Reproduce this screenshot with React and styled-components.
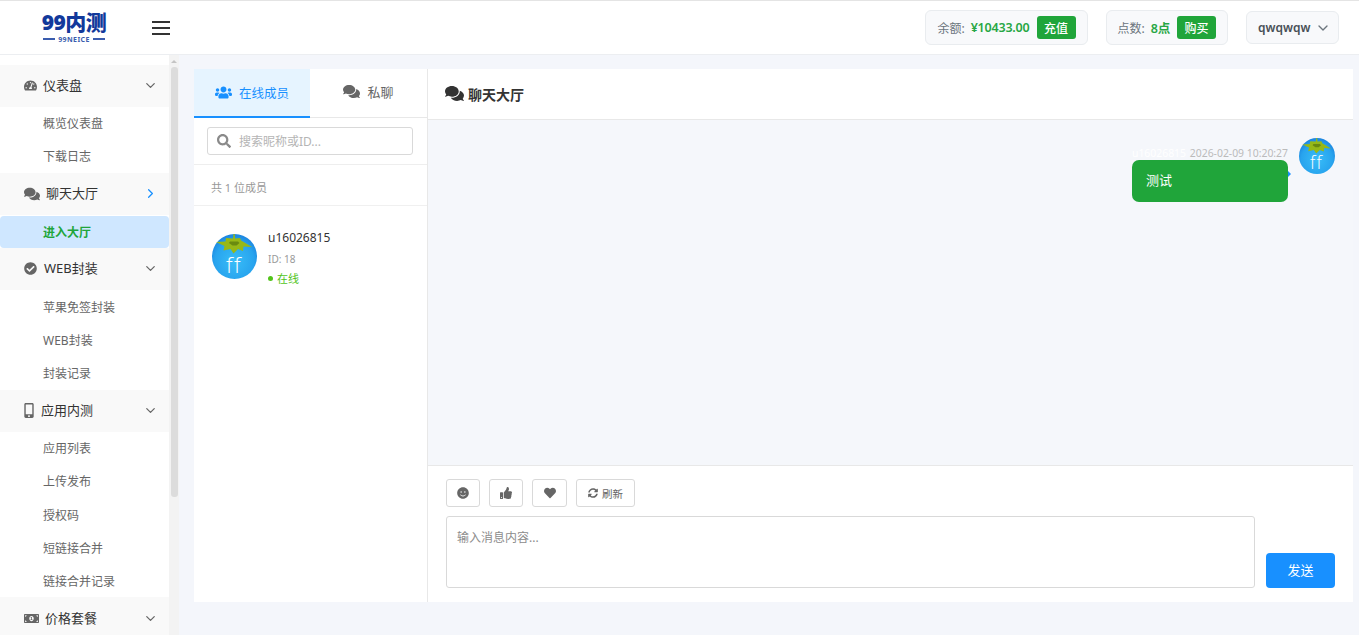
import React from 'react';
import styled, { createGlobalStyle } from 'styled-components';
import {
  FaTachometerAlt, FaComments, FaCheckCircle, FaMobileAlt, FaMoneyBillAlt, FaUsers, FaSearch, FaSmile, FaThumbsUp, FaHeart, FaSyncAlt,
} from 'react-icons/fa';
import { FiChevronDown, FiChevronRight } from 'react-icons/fi';

const menu = [
  { title: '仪表盘', icon: <FaTachometerAlt />, w: 13, size: 13, gap: 6, items: ['概览仪表盘', '下载日志'] },
  { title: '聊天大厅', icon: <FaComments />, w: 16, size: 16, gap: 6, open: true, items: ['进入大厅'] },
  { title: 'WEB封装', icon: <FaCheckCircle />, w: 13, size: 13, gap: 7, items: ['苹果免签封装', 'WEB封装', '封装记录'] },
  { title: '应用内测', icon: <FaMobileAlt />, w: 10, size: 15, gap: 7, items: ['应用列表', '上传发布', '授权码', '短链接合并', '链接合并记录'] },
  { title: '价格套餐', icon: <FaMoneyBillAlt />, w: 15, size: 15, gap: 6, items: [] },
];

const Avatar = ({ size }) => (
  <svg width={size} height={size} viewBox="0 0 45 45" style={{ flexShrink: 0 }}>
    <defs>
      <radialGradient id="berry" cx="50%" cy="60%" r="62%">
        <stop offset="0%" stopColor="#38bdf8" />
        <stop offset="70%" stopColor="#28a4ee" />
        <stop offset="100%" stopColor="#1a7fdc" />
      </radialGradient>
    </defs>
    <circle cx="22.5" cy="22.5" r="22.5" fill="url(#berry)" />
    <path d="M21.500 0h1.200l.4 4.500 5-.5 1 2.500L40 13l-8.500-.5L31 17l-5-2-4.500 4.500-3-4.500-7 1.500 1-4.500L4 8l9.500-.5L14 4l7 .5z" fill="#97b818" />
    <path d="M18 7.500h8l1.500 1.500-3 2.500h-4L17 9z" fill="#6a8a10" />
    <text x="22" y="39" textAnchor="middle" fontSize="22" fontWeight="300" letterSpacing="1.500" fontFamily="Open Sans, sans-serif" fill="#fff">ff</text>
  </svg>
);

const App = () => (
  <Page>
    <GlobalStyle />
    <TopBar>
      <Brand>
        <LogoMark>99内测</LogoMark>
        <LogoSub>99NEICE</LogoSub>
      </Brand>
      <Burger><i /><i /><i /></Burger>
      <TopRight>
        <Pill>
          <PillLabel>余额:</PillLabel>
          <PillValue>¥10433.00</PillValue>
          <PillButton>充值</PillButton>
        </Pill>
        <Pill>
          <PillLabel>点数:</PillLabel>
          <PillValue>8点</PillValue>
          <PillButton>购买</PillButton>
        </Pill>
        <UserPill>
          qwqwqw
          <FiChevronDown size={16} strokeWidth={2} />
        </UserPill>
      </TopRight>
    </TopBar>
    <Body>
      <SideWrap>
        <SideNav>
          {menu.map((group) => (
            <div key={group.title}>
              <GroupHead>
                <GroupIcon $w={group.w} $size={group.size}>{group.icon}</GroupIcon>
                <GroupTitle $gap={group.gap}>{group.title}</GroupTitle>
                <Chevron $open={group.open}>
                  {group.open ? <FiChevronRight size={15} /> : <FiChevronDown size={15} />}
                </Chevron>
              </GroupHead>
              {group.items.map((item) => (
                <NavItem key={item} $active={item === '进入大厅'}>{item}</NavItem>
              ))}
            </div>
          ))}
        </SideNav>
        <ScrollTrack>
          <ScrollArrow />
          <ScrollThumb />
        </ScrollTrack>
      </SideWrap>
      <Main>
        <Card>
          <Members>
            <Tabs>
              <Tab $active>
                <FaUsers size={17} />
                在线成员
              </Tab>
              <Tab>
                <FaComments size={17} />
                私聊
              </Tab>
            </Tabs>
            <SearchRow>
              <SearchBox>
                <FaSearch size={14} />
                <input placeholder="搜索昵称或ID..." />
              </SearchBox>
            </SearchRow>
            <CountRow>共 1 位成员</CountRow>
            <MemberRow>
              <Avatar size={45} />
              <MemberInfo>
                <MemberName>u16026815</MemberName>
                <MemberId>ID: 18</MemberId>
                <MemberState>在线</MemberState>
              </MemberInfo>
            </MemberRow>
          </Members>
          <Chat>
            <ChatHead>
              <FaComments size={19} />
              聊天大厅
            </ChatHead>
            <Messages>
              <Message>
                <MessageBody>
                  <MessageMeta>
                    <span>u16026815</span>
                    <span>2026-02-09 10:20:27</span>
                  </MessageMeta>
                  <Bubble>测试</Bubble>
                </MessageBody>
                <Avatar size={36} />
              </Message>
            </Messages>
            <Composer>
              <ToolRow>
                <ToolButton $w={34}><FaSmile size={12} /></ToolButton>
                <ToolButton $w={34}><FaThumbsUp size={12} /></ToolButton>
                <ToolButton $w={35}><FaHeart size={12} /></ToolButton>
                <ToolButton $w={59}>
                  <FaSyncAlt size={10} />
                  刷新
                </ToolButton>
              </ToolRow>
              <InputRow>
                <MessageInput placeholder="输入消息内容..." />
                <SendButton>发送</SendButton>
              </InputRow>
            </Composer>
          </Chat>
        </Card>
      </Main>
    </Body>
  </Page>
);

export default App;

const GlobalStyle = createGlobalStyle`
  html, body {
    margin: 0;
    height: 100%;
    overflow: hidden;
    background: #f4f6fb;
    font-family: "Noto Sans", "Noto Sans CJK SC", sans-serif;
  }
  * { box-sizing: border-box; }
`;

const Page = styled.div`
  height: 635px;
  display: flex;
  flex-direction: column;
  overflow: hidden;
`;

const TopBar = styled.header`
  height: 55px;
  flex-shrink: 0;
  display: flex;
  align-items: center;
  background: #fff;
  border-top: 1px solid #e4e4e4;
  border-bottom: 1px solid #eceef1;
  padding: 0 20px 0 43px;
`;

const Brand = styled.div`
  width: 62px;
  display: flex;
  flex-direction: column;
  align-items: center;
`;

const LogoMark = styled.div`
  font-size: 21px;
  line-height: 21px;
  font-weight: 900;
  color: #12399b;
  white-space: nowrap;
  letter-spacing: -0.5px;
`;

const LogoSub = styled.div`
  width: 100%;
  display: flex;
  align-items: center;
  gap: 3px;
  margin-top: 2px;
  font-size: 7px;
  line-height: 9px;
  font-weight: 700;
  letter-spacing: 0.4px;
  color: #3a5cae;
  white-space: nowrap;
  &::before, &::after {
    content: '';
    flex: 1;
    height: 2px;
    background: #3a5cae;
  }
`;

const Burger = styled.div`
  margin-left: 47px;
  width: 18px;
  display: flex;
  flex-direction: column;
  gap: 4px;
  i {
    display: block;
    height: 2px;
    background: #333;
  }
`;

const TopRight = styled.div`
  margin-left: auto;
  display: flex;
  align-items: center;
  gap: 18px;
`;

const Pill = styled.div`
  height: 35px;
  display: flex;
  align-items: center;
  padding: 0 11px;
  background: #f8f9fb;
  border: 1px solid #e9ecef;
  border-radius: 6px;
`;

const PillLabel = styled.span`
  font-size: 12px;
  color: #6c757d;
  margin-right: 6px;
`;

const PillValue = styled.span`
  font-size: 12.5px;
  font-weight: 600;
  letter-spacing: -0.2px;
  color: #28a745;
  margin-right: 7px;
`;

const PillButton = styled.button`
  width: 39px;
  height: 23px;
  padding: 0;
  border: 0;
  border-radius: 3px;
  background: #20a53a;
  color: #fff;
  font: 500 12px "Noto Sans", "Noto Sans CJK SC", sans-serif;
`;

const UserPill = styled.div`
  height: 33px;
  width: 93px;
  display: flex;
  align-items: center;
  gap: 5px;
  padding-left: 11px;
  background: #f8f9fb;
  border: 1px solid #e9ecef;
  border-radius: 6px;
  font-size: 12px;
  font-weight: 600;
  color: #495057;
  svg { color: #6c757d; }
`;

const Body = styled.div`
  flex: 1;
  min-height: 0;
  display: flex;
`;

const SideWrap = styled.aside`
  width: 179px;
  flex-shrink: 0;
  display: flex;
`;

const SideNav = styled.nav`
  width: 169px;
  overflow: hidden;
  background: #fff;
  padding-top: 9.6px;
`;

const GroupHead = styled.div`
  height: 42px;
  display: flex;
  align-items: center;
  padding: 0 11px 0 24px;
  background: #f9f9f9;
`;

const GroupIcon = styled.span`
  width: ${(p) => p.$w}px;
  display: flex;
  justify-content: center;
  color: #666;
  font-size: ${(p) => p.$size}px;
`;

const GroupTitle = styled.span`
  margin-left: ${(p) => p.$gap}px;
  margin-bottom: 2px;
  font-size: 13px;
  color: #333;
`;

const Chevron = styled.span`
  margin-left: auto;
  display: flex;
  color: ${(p) => (p.$open ? '#1890ff' : '#666')};
`;

const NavItem = styled.div`
  height: ${(p) => (p.$active ? '32px' : '33.2px')};
  margin-top: ${(p) => (p.$active ? '1px' : '0')};
  display: flex;
  align-items: center;
  padding-left: 43px;
  font-size: 12px;
  border-radius: ${(p) => (p.$active ? '4px' : '0')};
  background: ${(p) => (p.$active ? '#cfe7ff' : 'transparent')};
  color: ${(p) => (p.$active ? '#20a53a' : '#666')};
  font-weight: ${(p) => (p.$active ? 700 : 400)};
`;

const ScrollTrack = styled.div`
  width: 10px;
  background: #f3f3f3;
  display: flex;
  flex-direction: column;
  align-items: center;
`;

const ScrollArrow = styled.div`
  margin-top: 5px;
  border-left: 3px solid transparent;
  border-right: 3px solid transparent;
  border-bottom: 3px solid #c4c4c4;
`;

const ScrollThumb = styled.div`
  margin-top: 4px;
  width: 7px;
  height: 430px;
  border-radius: 3px;
  background: #dcdcdc;
`;

const Main = styled.main`
  flex: 1;
  min-width: 0;
  padding: 14px 6px 0 15px;
`;

const Card = styled.div`
  height: 533px;
  display: flex;
  background: #fff;
`;

const Members = styled.section`
  width: 234px;
  flex-shrink: 0;
  border-right: 1px solid #e8e8e8;
  display: flex;
  flex-direction: column;
`;

const Tabs = styled.div`
  display: flex;
  height: 49px;
  border-bottom: 1px solid #e8e8e8;
`;

const Tab = styled.div`
  width: ${(p) => (p.$active ? '116px' : '117px')};
  display: flex;
  align-items: center;
  justify-content: center;
  gap: 7px;
  padding-bottom: ${(p) => (p.$active ? '1px' : '3px')};
  font-size: ${(p) => (p.$active ? '12.5px' : '13px')};
  margin-bottom: ${(p) => (p.$active ? '-1px' : '0')};
  color: ${(p) => (p.$active ? '#1890ff' : '#666')};
  background: ${(p) => (p.$active ? '#e6f4ff' : '#fff')};
  border-bottom: ${(p) => (p.$active ? '2px solid #1890ff' : '0')};
`;

const SearchRow = styled.div`
  height: 47px;
  padding: 9px 14px 0 13px;
  border-bottom: 1px solid #eee;
`;

const SearchBox = styled.div`
  height: 28px;
  display: flex;
  align-items: center;
  gap: 8px;
  padding: 0 9px;
  border: 1px solid #d9d9d9;
  border-radius: 3px;
  color: #8a8a8a;
  input {
    flex: 1;
    min-width: 0;
    border: 0;
    outline: 0;
    padding: 0;
    font: 12px "Noto Sans", "Noto Sans CJK SC", sans-serif;
    &::placeholder { color: #b5b5b5; }
  }
`;

const CountRow = styled.div`
  height: 41px;
  display: flex;
  align-items: center;
  padding: 4px 0 0 17px;
  font-size: 11px;
  color: #999;
  border-bottom: 1px solid #f0f0f0;
`;

const MemberRow = styled.div`
  display: flex;
  align-items: flex-start;
  gap: 11px;
  padding: 28px 18px 0;
`;

const MemberInfo = styled.div`
  display: flex;
  flex-direction: column;
  margin-top: -5px;
`;

const MemberName = styled.div`
  font-size: 12px;
  line-height: 17px;
  color: #333;
`;

const MemberId = styled.div`
  margin-top: 6px;
  font-size: 10px;
  line-height: 14px;
  color: #999;
`;

const MemberState = styled.div`
  margin-top: 5px;
  display: flex;
  align-items: center;
  gap: 4px;
  font-size: 11px;
  line-height: 15px;
  color: #52c41a;
  &::before {
    content: '';
    width: 5px;
    height: 5px;
    border-radius: 50%;
    background: #52c41a;
  }
`;

const Chat = styled.section`
  flex: 1;
  min-width: 0;
  display: flex;
  flex-direction: column;
`;

const ChatHead = styled.div`
  height: 51px;
  flex-shrink: 0;
  display: flex;
  align-items: center;
  gap: 4px;
  padding: 0 0 1px 17px;
  font-size: 14px;
  font-weight: 700;
  color: #333;
  border-bottom: 1px solid #e8e8e8;
`;

const Messages = styled.div`
  flex: 1;
  min-height: 0;
  background: #f5f7fb;
  padding: 18px 18px 0 0;
`;

const Message = styled.div`
  display: flex;
  justify-content: flex-end;
  gap: 11px;
`;

const MessageBody = styled.div`
  width: 156px;
  padding-top: 7px;
`;

const MessageMeta = styled.div`
  height: 15px;
  display: flex;
  justify-content: space-between;
  align-items: center;
  font-size: 10.4px;
  white-space: nowrap;
  color: #bbb;
  span:first-child { color: #fff; }
`;

const Bubble = styled.div`
  position: relative;
  height: 42px;
  display: flex;
  align-items: center;
  padding: 0 0 3px 14px;
  border-radius: 7px;
  background: #20a53a;
  color: #fff;
  font-size: 13px;
  &::after {
    content: '';
    position: absolute;
    left: 100%;
    top: 11px;
    border-left: 3px solid #1890ff;
    border-top: 3px solid transparent;
    border-bottom: 3px solid transparent;
  }
`;

const Composer = styled.div`
  height: 137px;
  flex-shrink: 0;
  border-top: 1px solid #e8e8e8;
  padding: 13px 18px 0;
`;

const ToolRow = styled.div`
  display: flex;
  gap: 9px;
`;

const ToolButton = styled.button`
  width: ${(p) => p.$w}px;
  height: 28px;
  display: flex;
  align-items: center;
  justify-content: center;
  gap: 4px;
  padding: 0;
  background: #fff;
  border: 1px solid #d9d9d9;
  border-radius: 3px;
  color: #666;
  font: 10.5px "Noto Sans", "Noto Sans CJK SC", sans-serif;
`;

const InputRow = styled.div`
  display: flex;
  align-items: flex-end;
  gap: 11px;
  margin-top: 9px;
`;

const MessageInput = styled.textarea`
  flex: 1;
  min-width: 0;
  height: 72px;
  padding: 11px 10px;
  resize: none;
  outline: 0;
  border: 1px solid #d9d9d9;
  border-radius: 3px;
  font: 12px "Noto Sans", "Noto Sans CJK SC", sans-serif;
  &::placeholder { color: #8c8c8c; }
`;

const SendButton = styled.button`
  width: 69px;
  height: 35px;
  padding: 0 0 2px;
  border: 0;
  border-radius: 4px;
  background: #1890ff;
  color: #fff;
  font: 13px "Noto Sans", "Noto Sans CJK SC", sans-serif;
`;
